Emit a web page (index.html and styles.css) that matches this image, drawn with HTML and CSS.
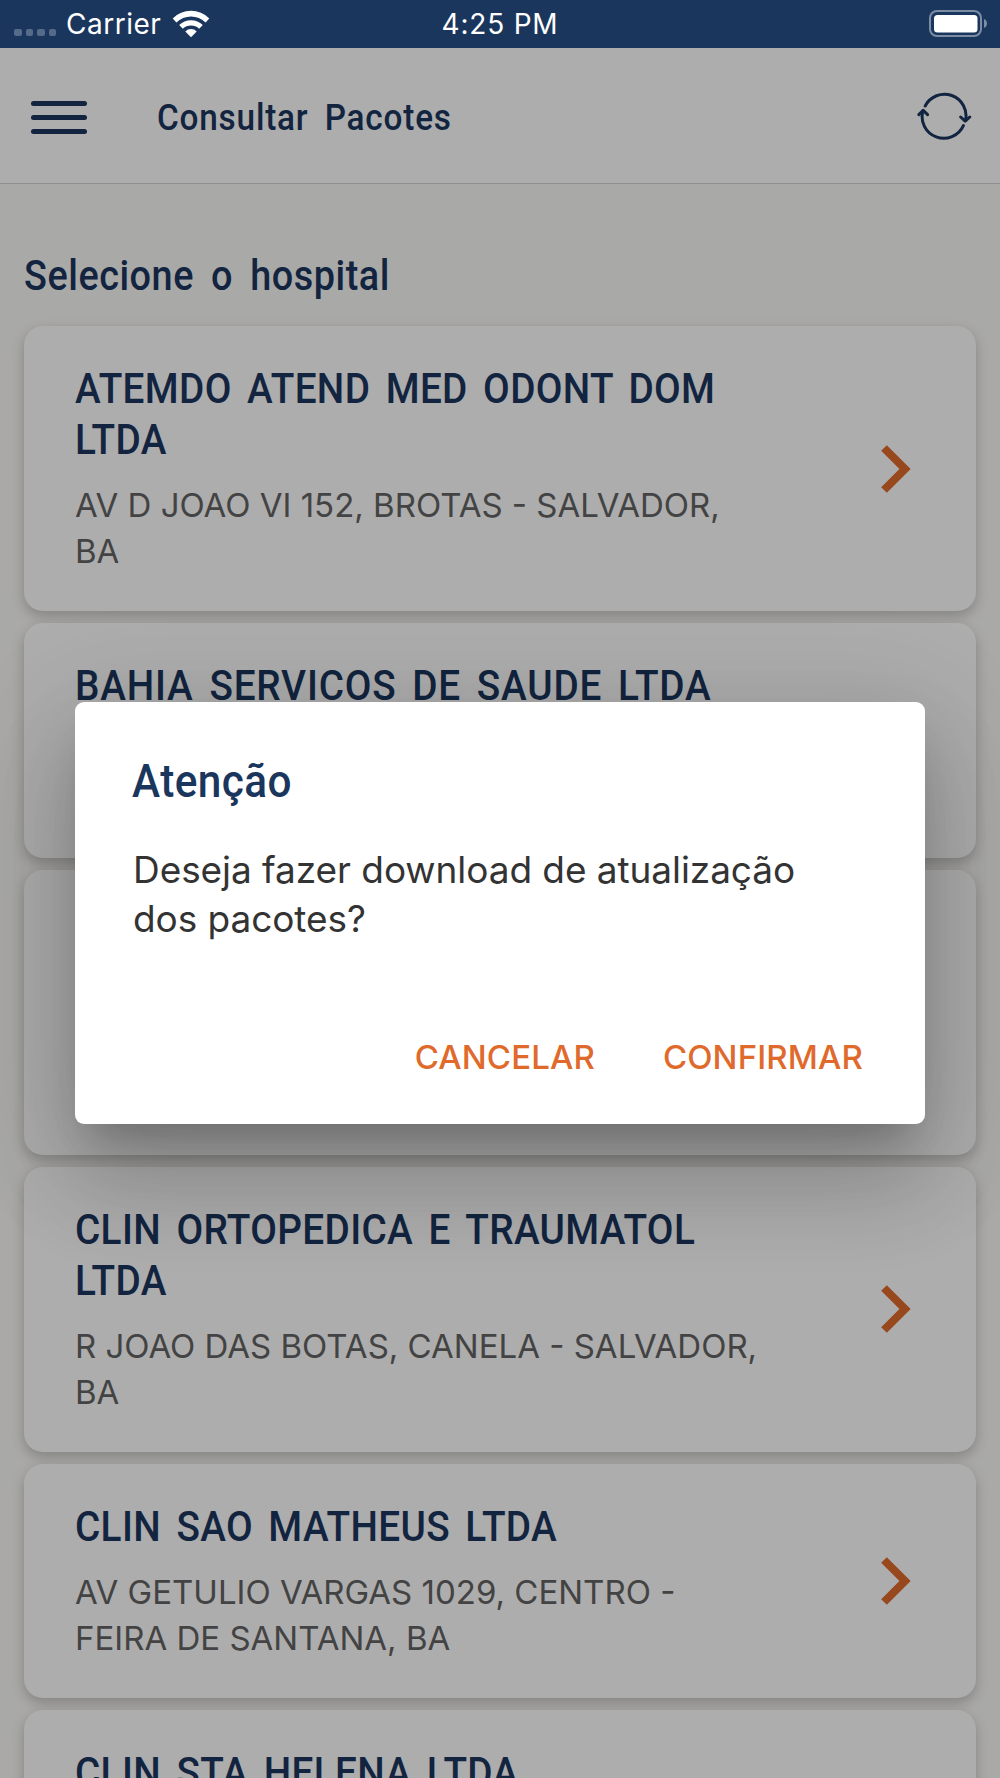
FILE: index.html
```
<!DOCTYPE html>
<html lang="pt-BR">
<head>
    <meta charset="UTF-8">
    <meta name="viewport" content="width=device-width, initial-scale=1.0">
    <title>Consultar Pacotes</title>
    <link rel="stylesheet" href="styles.css">
</head>
<body>
    <div class="status-bar">
        <div class="carrier">
            <div class="signal"><span></span><span></span><span></span><span></span></div>
            <span class="carrier-name">Carrier</span>
            <svg class="wifi" width="38" height="28" viewBox="0 0 38 28">
                <path d="M0.7 8.4 A26 26 0 0 1 37.3 8.4 L33.6 12.4 A20.8 20.8 0 0 0 4.4 12.4 Z"/>
                <path d="M7.2 15 A17 17 0 0 1 30.8 15 L27.2 18.8 A11.8 11.8 0 0 0 10.8 18.8 Z"/>
                <path d="M13.3 21.4 A8 8 0 0 1 24.7 21.4 L19 27.2 Z"/>
            </svg>
        </div>
        <span class="time">4:25 PM</span>
        <div class="battery-area">
            <svg width="60" height="28" viewBox="0 0 60 28">
                <rect x="1" y="1" width="51" height="25" rx="7" fill="none" stroke="#7d8ca5" stroke-width="2"/>
                <rect x="5" y="5" width="43.5" height="17.5" rx="3.5" fill="#fff"/>
                <path d="M55 9 C59 10.5 59 16.5 55 18 Z" fill="#7d8ca5"/>
            </svg>
        </div>
    </div>

    <div class="screen">
        <div class="header">
            <div class="menu"><span></span><span></span><span></span></div>
            <h1>Consultar Pacotes</h1>
            <svg class="refresh" width="56" height="48" viewBox="0 0 56 48">
                <path d="M9.2 14 A21.6 21.6 0 0 1 49.5 28.6"/>
                <path d="M44.6 25 L49.2 29.2 L53.8 25"/>
                <path d="M47.4 33.6 A21.6 21.6 0 0 1 7 18.6"/>
                <path d="M2.8 22.6 L7.2 18.4 L11.6 22.6"/>
            </svg>
        </div>

        <div class="content">
            <h2>Selecione o hospital</h2>

            <div class="card">
                <div class="info">
                    <h3>ATEMDO ATEND MED ODONT DOM LTDA</h3>
                    <p>AV D JOAO VI 152, BROTAS - SALVADOR, BA</p>
                </div>
                <svg class="arrow" width="30" height="48" viewBox="0 0 30 48"><path d="M3 3 L24 24 L3 45"/></svg>
            </div>
            <div class="card card-small">
                <div class="info">
                    <h3 class="wide">BAHIA SERVICOS DE SAUDE LTDA</h3>
                </div>
            </div>
            <div class="card"></div>
            <div class="card">
                <div class="info">
                    <h3>CLIN ORTOPEDICA E TRAUMATOL LTDA</h3>
                    <p>R JOAO DAS BOTAS, CANELA - SALVADOR, BA</p>
                </div>
                <svg class="arrow" width="30" height="48" viewBox="0 0 30 48"><path d="M3 3 L24 24 L3 45"/></svg>
            </div>
            <div class="card card-small">
                <div class="info">
                    <h3>CLIN SAO MATHEUS LTDA</h3>
                    <p>AV GETULIO VARGAS 1029, CENTRO - FEIRA DE SANTANA, BA</p>
                </div>
                <svg class="arrow" width="30" height="48" viewBox="0 0 30 48"><path d="M3 3 L24 24 L3 45"/></svg>
            </div>
            <div class="card card-small">
                <div class="info">
                    <h3>CLIN STA HELENA LTDA</h3>
                </div>
            </div>
        </div>

        <div class="overlay">
            <div class="modal">
                <h4>Atenção</h4>
                <p>Deseja fazer download de atualização dos pacotes?</p>
                <div class="buttons">
                    <button>CANCELAR</button>
                    <button>CONFIRMAR</button>
                </div>
            </div>
        </div>
    </div>
</body>
</html>
```

FILE: styles.css
```
* {
    box-sizing: border-box; margin: 0; padding: 0;
}
body {
    height: 1778px; overflow: hidden; font-family: Inter, sans-serif; background-color: #faf9f6;
}
/* headings use a slightly narrowed face */
h1, h2, h3, h4 {
    font-family: Roboto, sans-serif; font-weight: 500; color: #1b365d; transform: scaleX(0.9); transform-origin: left;
}

/* status bar */
.status-bar {
    display: grid; grid-template-columns: 1fr auto 1fr; align-items: center; height: 48px; background-color: #1b365d; color: #fff; font-size: 28px; line-height: 48px;
}
.carrier {
    display: flex; align-items: center; padding-left: 14px;
}
.signal {
    display: flex; gap: 4px; margin-top: 17px;
}
.signal span {
    width: 7.5px; height: 7.5px; border-radius: 2px; background-color: #566a89;
}
.carrier-name {
    margin-left: 10px; letter-spacing: 0.5px;
}
.wifi {
    margin-left: 11px; margin-bottom: 1px; fill: #fff;
}
.time {
    letter-spacing: 0.8px;
}
.battery-area {
    display: flex; justify-content: flex-end; padding-right: 11px;
}

.screen {
    position: relative; height: 1730px; overflow: hidden;
}
.header {
    display: flex; align-items: center; height: 136px; padding: 0 28px 0 31px; background-color: #fff; border-bottom: 1px solid #d2d4d6;
}
.menu {
    display: flex; flex-direction: column; gap: 9px; width: 56px; margin-top: 3px;
}
.menu span {
    height: 5px; border-radius: 3px; background-color: #1b365d;
}
.header h1 {
    flex: 1; margin-left: 70px; font-size: 37px; line-height: 44px; letter-spacing: 0.9px; word-spacing: 8px; margin-top: 4px;
}
.refresh {
    fill: none; stroke: #1b365d; stroke-width: 3; stroke-linecap: round; stroke-linejoin: round;
}

/* hospital list */
.content {
    display: flex; flex-direction: column; gap: 12px; padding: 67px 24px 0;
}
.content h2 {
    height: 63px; font-size: 42px; line-height: 50px; letter-spacing: 0.6px; word-spacing: 8px;
}
.card {
    display: flex; flex-shrink: 0; align-items: center; justify-content: space-between; height: 285px; padding: 37px 65px 37px 51px; background-color: #fff; border-radius: 19px; box-shadow: 0 5px 13px rgba(0, 0, 0, 0.22);
}
.card-small {
    height: 234.5px;
}
.info {
    align-self: flex-start; width: 690px;
}
.info h3 {
    width: 770px; font-size: 43px; line-height: 51px; letter-spacing: 0.4px; word-spacing: 6px;
}
.info h3.wide {
    letter-spacing: 0.9px;
}
.info p {
    margin-top: 17px; font-size: 33px; line-height: 46px; color: #646464;
}
.arrow {
    fill: none; stroke: #e06a2b; stroke-width: 8;
}

/* confirmation dialog */
.overlay {
    position: absolute; top: 0; left: 0; right: 0; bottom: 0; display: flex; align-items: center; justify-content: center; background-color: rgba(0, 0, 0, 0.32);
}
.modal {
    display: flex; flex-direction: column; width: 850px; height: 422.5px; padding: 51px 54px 39px 57px; background-color: #fff; border-radius: 9px;
    box-shadow: 0 27px 36px -17px rgba(0, 0, 0, 0.2), 0 58px 92px 7px rgba(0, 0, 0, 0.14), 0 22px 111px 19px rgba(0, 0, 0, 0.12);
}
.modal h4 {
    font-size: 47px; line-height: 56px; letter-spacing: 0.5px;
}
.modal p {
    width: 700px; margin: 36px 0 0 1px; font-size: 37px; line-height: 49px; letter-spacing: -0.07px; color: #333;
}
.buttons {
    display: flex; justify-content: flex-end; gap: 52px; margin-top: auto;
}
.buttons button {
    padding: 0 8px; border: none; background: none; font-family: Inter, sans-serif; font-size: 33px; font-weight: 500; line-height: 56px; letter-spacing: 0.1px; color: #e06a2b; cursor: pointer;
}
```
